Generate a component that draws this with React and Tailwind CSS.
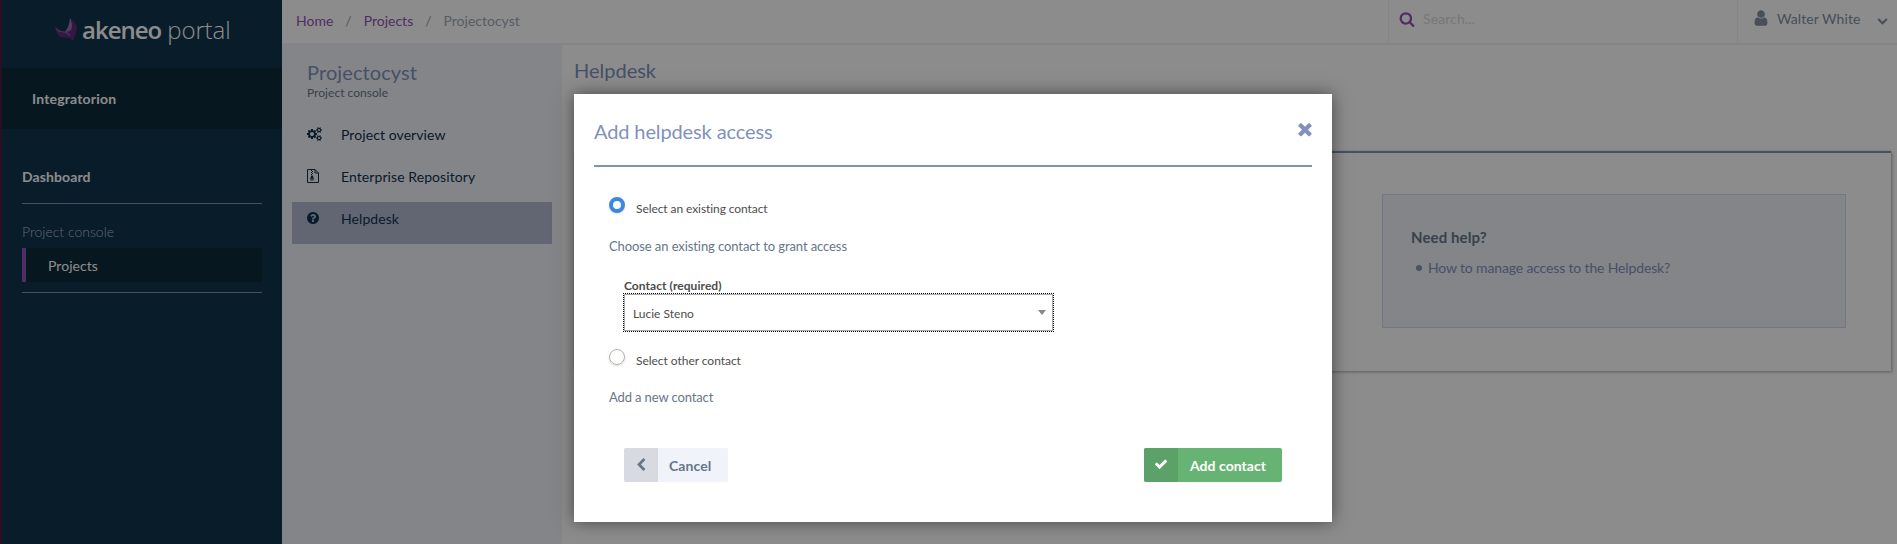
import React from "react";

const PATHS = {
  times: "M1490 1322q0 40-28 68l-136 136q-28 28-68 28t-68-28l-294-294-294 294q-28 28-68 28t-68-28l-136-136q-28-28-28-68t28-68l294-294-294-294q-28-28-28-68t28-68l136-136q28-28 68-28t68 28l294 294 294-294q28-28 68-28t68 28l136 136q28 28 28 68t-28 68l-294 294 294 294q28 28 28 68z",
  check: "M1671 566q0 40-28 68l-724 724-136 136q-28 28-68 28t-68-28l-136-136-362-362q-28-28-28-68t28-68l136-136q28-28 68-28t68 28l294 295 656-657q28-28 68-28t68 28l136 136q28 28 28 68z",
  left: "M1427 301l-531 531 531 531q19 19 19 45t-19 45l-166 166q-19 19-45 19t-45-19l-742-742q-19-19-19-45t19-45l742-742q19-19 45-19t45 19l166 166q19 19 19 45t-19 45z",
  down: "M1683 808l-742 741q-19 19-45 19t-45-19l-742-741q-19-19-19-45.5t19-45.5l166-165q19-19 45-19t45 19l531 531 531-531q19-19 45-19t45 19l166 165q19 19 19 45.5t-19 45.5z",
  search: "M1216 832q0-185-131.5-316.5t-316.5-131.5-316.5 131.5-131.5 316.5 131.5 316.5 316.5 131.5 316.5-131.5 131.5-316.5zm512 832q0 52-38 90t-90 38q-54 0-90-38l-343-342q-179 124-399 124-143 0-273.5-55.5t-225-150-150-225-55.5-273.5 55.5-273.5 150-225 225-150 273.5-55.5 273.5 55.5 225 150 150 225 55.5 273.5q0 220-124 399l343 343q37 37 37 90z",
  user: "M1536 1399q0 109-62.5 187t-150.5 78h-854q-88 0-150.5-78t-62.5-187q0-85 8.5-160.5t31.5-152 58.5-131 94-89 134.5-34.5q131 128 313 128t313-128q76 0 134.5 34.5t94 89 58.5 131 31.5 152 8.5 160.5zm-256-887q0 159-112.5 271.5t-271.5 112.5-271.5-112.5-112.5-271.5 112.5-271.5 271.5-112.5 271.5 112.5 112.5 271.5z",
  question: "M1024 1376v-192q0-14-9-23t-23-9h-192q-14 0-23 9t-9 23v192q0 14 9 23t23 9h192q14 0 23-9t9-23zm256-672q0-88-55.5-163t-138.5-116-170-41q-243 0-371 213-15 24 8 42l132 100q7 6 19 6 16 0 25-12 53-68 86-92 34-24 86-24 48 0 85.5 26t37.5 59q0 38-20 61t-68 45q-63 28-115.5 86.5t-52.5 125.5v36q0 14 9 23t23 9h192q14 0 23-9t9-23q0-19 21.5-49.5t54.5-49.5q32-18 49-28.5t46-35 44.5-48 28-60.5 12.5-81zm384 192q0 209-103 385.5t-279.5 279.5-385.5 103-385.5-103-279.5-279.5-103-385.5 103-385.5 279.5-279.5 385.5-103 385.5 103 279.5 279.5 103 385.5z",
  cogs: "M896 896q0-106-75-181t-181-75-181 75-75 181 75 181 181 75 181-75 75-181zm768 512q0-52-38-90t-90-38-90 38-38 90q0 53 37.5 90.5t90.5 37.5 90.5-37.5 37.5-90.5zm0-1024q0-52-38-90t-90-38-90 38-38 90q0 53 37.5 90.5t90.5 37.5 90.5-37.5 37.5-90.5zm-384 421v185q0 10-7 19.5t-16 10.5l-155 24q-11 35-32 76 34 48 90 115 7 11 7 20 0 12-7 19-23 30-82.5 89.5t-78.5 59.5q-11 0-21-7l-115-90q-37 19-77 31-11 108-23 155-7 24-30 24h-186q-11 0-20-7.5t-10-17.5l-23-153q-34-10-75-31l-118 89q-7 7-20 7-11 0-21-8-144-133-144-160 0-9 7-19 10-14 41-53t47-61q-23-44-35-82l-152-24q-10-1-17-9.5t-7-19.5v-185q0-10 7-19.5t16-10.5l155-24q11-35 32-76-34-48-90-115-7-11-7-20 0-12 7-20 22-30 82-89t79-59q11 0 21 7l115 90q34-18 77-32 11-108 23-154 7-24 30-24h186q11 0 20 7.5t10 17.5l23 153q34 10 75 31l118-89q8-7 20-7 11 0 21 8 144 133 144 160 0 8-7 19-12 16-42 54t-45 60q23 48 34 82l152 23q10 2 17 10.5t7 19.5zm640 533v140q0 16-149 31-12 27-30 52 51 113 51 138 0 4-4 7-122 71-124 71-8 0-46-47t-52-68q-20 2-30 2t-30-2q-14 21-52 68t-46 47q-2 0-124-71-4-3-4-7 0-25 51-138-18-25-30-52-149-15-149-31v-140q0-16 149-31 13-29 30-52-51-113-51-138 0-4 4-7 4-2 35-20t59-34 30-16q8 0 46 46.5t52 67.5q20-2 30-2t30 2q51-71 92-112l6-2q4 0 124 70 4 3 4 7 0 25-51 138 17 23 30 52 149 15 149 31zm0-1024v140q0 16-149 31-12 27-30 52 51 113 51 138 0 4-4 7-122 71-124 71-8 0-46-47t-52-68q-20 2-30 2t-30-2q-14 21-52 68t-46 47q-2 0-124-71-4-3-4-7 0-25 51-138-18-25-30-52-149-15-149-31v-140q0-16 149-31 13-29 30-52-51-113-51-138 0-4 4-7 4-2 35-20t59-34 30-16q8 0 46 46.5t52 67.5q20-2 30-2t30 2q51-71 92-112l6-2q4 0 124 70 4 3 4 7 0 25-51 138 17 23 30 52 149 15 149 31z",
};

function Icon({ name, className }) {
  return (
    <svg viewBox={name === "cogs" ? "0 0 1920 1792" : "0 0 1792 1792"} fill="currentColor" className={className}>
      <path d={PATHS[name]} />
    </svg>
  );
}

function ArchiveIcon() {
  return (
    <svg viewBox="0 0 12 14" fill="none" stroke="currentColor" className="mt-px h-[14px] w-3 shrink-0">
      <path d="M.5.5H8L11.5 4V13.5H.5ZM8 .5V4H11.5" />
      <path d="M4.5 1V2M5.5 2V3M4.5 3V4M5.5 4V5M4.5 5V6" strokeWidth="1" />
      <path d="M4.2 6.5H5.8L6.8 10Q6.8 11.6 5 11.6T3.2 10Z" fill="currentColor" stroke="none" />
      <path d="M4.2 10.2H5.8" stroke="#f0f3f9" strokeWidth=".8" />
    </svg>
  );
}

function Logo() {
  return (
    <div className="flex h-[68px] pl-[53px] pt-[18px]">
      <svg viewBox="0 0 22 23" className="h-[23px] w-[22px] shrink-0">
        <path d="M0 9Q5 13.5 10 13.5Q14 11 15 0Q19 3 22 8Q22 13 18 23L15 20Q9 19.500 5 19Q1 15 0 9Z" fill="#5f2c78" />
        <path d="M0 9Q5 13.500 10 13.5Q14 13 16 19Q9 13.500 4 14Q1 12 0 9Z" fill="#80529a" />
        <path d="M15 0Q18.500 7 16 12Q13.500 14.500 10 13.500Q14 10 15 0Z" fill="#9a73ab" />
      </svg>
      <div className="ml-[5px] mt-[-4px] flex font-['Open_Sans',sans-serif] text-[24px] leading-8 text-white">
        <span className="font-semibold tracking-[-1px]">akeneo</span>
        <span className="ml-[6px] font-light tracking-[-0.1px]">portal</span>
      </div>
    </div>
  );
}

function Sidebar() {
  return (
    <aside className="w-[282px] shrink-0 border-l-2 border-[#4b1d3d] bg-[#0f334c] text-white">
      <Logo />
      <div className="flex h-[61px] items-center bg-[#0e2b3a] pl-[30px] text-sm font-bold tracking-[0.18px]">Integratorion</div>
      <nav className="ml-[20px] mr-[18px] w-[240px] text-sm">
        <div className="h-[75px] border-b border-[#8291a5] pt-[38px] font-bold leading-5 tracking-[0.1px]">Dashboard</div>
        <div className="pt-[18px] font-light leading-5 text-[#b4bfca]">Project console</div>
        <div className="mt-[6px] flex h-[34px] items-center border-l-4 border-[#9452ba] bg-[#0e2b3a] pl-[22px] pt-px tracking-[0.05px]">Projects</div>
        <div className="mt-[10px] border-t border-[#8291a5]" />
      </nav>
    </aside>
  );
}

function Topbar() {
  return (
    <header className="flex h-[45px] shrink-0 border-b-2 border-[#f0f1f9] bg-white text-sm leading-[42px]">
      <div className="flex flex-1 gap-3 pl-[14px] text-[#9452ba]">
        <span>Home</span><span className="text-[#a0a0a8]">/</span>
        <span>Projects</span><span className="text-[#a0a0a8]">/</span>
        <span className="text-[#a1a9b7]">Projectocyst</span>
      </div>
      <div className="flex w-[349px] border-l border-[#f0f1f9] pl-[10px]">
        <Icon name="search" className="mt-[11px] size-4 text-[#9452ba]" />
        <span className="ml-[8px] leading-[37px] tracking-[0.1px] text-[#dadada]">Search...</span>
      </div>
      <div className="flex w-[160px] border-l border-[#f0f1f9] pl-[14px] text-[#8490a3]">
        <Icon name="user" className="mt-[9px] size-[18px]" />
        <span className="ml-[7px] leading-[38px] tracking-[0.08px]">Walter White</span>
        <Icon name="down" className="ml-[17px] mt-[15px] size-[11px]" />
      </div>
    </header>
  );
}

function ProjectMenu() {
  return (
    <aside className="w-[280px] shrink-0 bg-[#f0f3f9] px-[10px] pt-[15px] text-[#11324d]">
      <h1 className="pl-[15px] text-[20px] leading-6 tracking-[0.1px] text-[#8092bc]">Projectocyst</h1>
      <div className="pl-[15px] pt-px text-xs leading-4 tracking-[0.03px] text-[#67768a]">Project console</div>
      <ul className="mt-[17px] text-sm tracking-[0.08px]">
        <li className="flex h-[42px] pl-[15px] pt-[7px] leading-5">
          <Icon name="cogs" className="mt-[2px] h-[14px] w-[15px]" /><span className="ml-[19px]">Project overview</span>
        </li>
        <li className="flex h-[42px] pl-[15px] pt-[7px] leading-5">
          <div className="mt-px"><ArchiveIcon /></div><span className="ml-[22px]">Enterprise Repository</span>
        </li>
        <li className="flex h-[42px] bg-[#b1bbcf] pl-[14px] pt-[7px] leading-5">
          <Icon name="question" className="mt-[2px] size-[14px]" /><span className="ml-[21px]">Helpdesk</span>
        </li>
      </ul>
    </aside>
  );
}

function Helpdesk() {
  return (
    <main className="flex-1 bg-white pl-[12px] pr-[6px] pt-[13px]">
      <h2 className="text-[20px] leading-6 text-[#8092bc]">Helpdesk</h2>
      <section className="mt-[69px] flex h-[220px] justify-end border-t-2 border-[#8092b8] pr-[45px] pt-[41px] shadow-[1px_1px_3px_rgba(0,0,0,0.35)]">
        <div className="h-[134px] w-[464px] border border-[#d2d9e9] bg-[#f0f3f9] pl-[28px] pt-[32px]">
          <h3 className="text-[15px] font-bold leading-5 tracking-[0.1px] text-[#67768a]">Need help?</h3>
          <div className="mt-[11px] flex items-center text-sm leading-5 tracking-[-0.15px] text-[#8092bc]">
            <span className="ml-[5px] mr-[6px] size-[6px] rounded-full bg-[#8092bc]" />How to manage access to the Helpdesk?
          </div>
        </div>
      </section>
    </main>
  );
}

function Dialog() {
  return (
    <div role="dialog" className="h-[428px] w-[758px] bg-white px-5 text-[#4d4d4d] shadow-[0_0_16px_rgba(0,0,0,0.5)]">
      <header className="flex h-[73px] justify-between border-b-2 border-[#8092b8] pt-[25px] text-[#8092bc]">
        <h2 className="text-[20px] leading-6 tracking-[-0.12px]">Add helpdesk access</h2>
        <Icon name="times" className="mr-[-3px] size-5" />
      </header>
      <div className="pl-[15px] text-xs">
        <label className="flex h-[56px] pt-[30px]">
          <span className="size-4 rounded-full border-4 border-[#3b86e6] bg-white shadow-sm" />
          <span className="ml-[11px] mt-[4px] leading-4 tracking-[-0.08px]">Select an existing contact</span>
        </label>
        <p className="mt-[13px] text-[13px] leading-5 tracking-[-0.09px] text-[#67768a]">Choose an existing contact to grant access</p>
        <div className="ml-[14px] mt-[22px] w-[431px]">
          <div className="h-[15px] pl-px font-bold leading-4 tracking-[0.06px]">Contact (required)</div>
          <div className="h-[39px] border border-dotted border-black">
            <div className="flex h-full w-full items-center justify-between border border-[#aaa] pl-2 pr-[6px]">
              <span className="pt-[2px]">Lucie Steno</span>
              <span className="border-x-4 border-t-[5px] border-x-transparent border-t-[#888]" />
            </div>
          </div>
        </div>
        <label className="mt-[17px] flex">
          <span className="size-4 rounded-full border border-[#b5b0aa] shadow-sm" />
          <span className="ml-[11px] mt-[4px] leading-4 tracking-[-0.04px]">Select other contact</span>
        </label>
        <p className="mt-[18px] text-[13px] leading-5 tracking-[-0.12px] text-[#67768a]">Add a new contact</p>
      </div>
      <footer className="mt-[41px] flex justify-between pl-[30px] pr-[30px] text-sm font-bold leading-[35px]">
        <button className="flex h-[34px] w-[104px] overflow-hidden rounded-xs bg-[#f0f3f9] text-[#67768a]">
          <span className="flex w-[34px] justify-center bg-[#d8dae1] pt-[10px]"><Icon name="left" className="size-[14px]" /></span>
          <span className="pl-[11px] tracking-[0.1px]">Cancel</span>
        </button>
        <button className="flex h-[34px] w-[138px] overflow-hidden rounded-xs bg-[#67b373] text-white">
          <span className="flex w-[34px] justify-center bg-[#5ca167] pt-[9px]"><Icon name="check" className="size-[14px]" /></span>
          <span className="pl-[12px] tracking-[0.04px]">Add contact</span>
        </button>
      </footer>
    </div>
  );
}

export default function App() {
  return (
    <div className="relative flex h-[544px] w-[1897px] overflow-hidden font-['Lato',sans-serif]">
      <Sidebar />
      <div className="flex flex-1 flex-col">
        <Topbar />
        <div className="flex flex-1">
          <ProjectMenu />
          <Helpdesk />
        </div>
      </div>
      <div className="absolute inset-0 flex bg-black/45 pl-[574px] pt-[94px]">
        <Dialog />
      </div>
    </div>
  );
}
